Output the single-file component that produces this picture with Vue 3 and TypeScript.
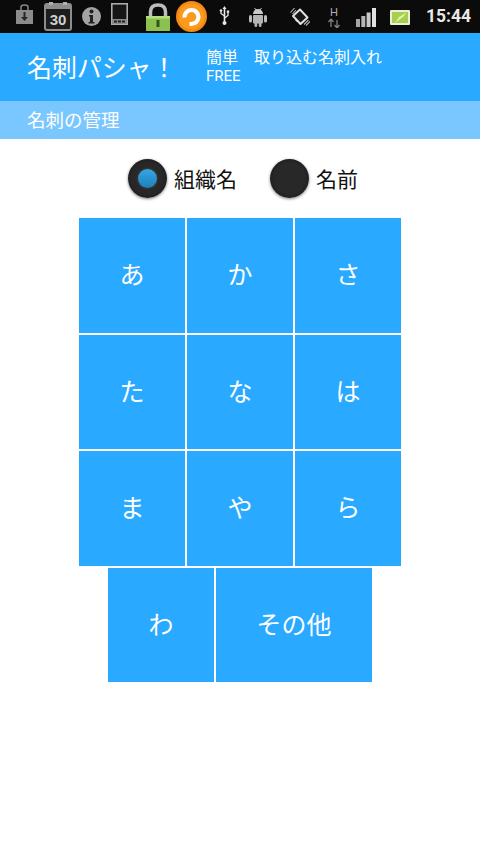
<script setup lang="ts">
const rows: string[][] = [
  ['あ', 'か', 'さ'],
  ['た', 'な', 'は'],
  ['ま', 'や', 'ら'],
]
</script>

<template>
  <div class="page">
    <div class="status">
      <svg class="i i-bag" width="19" height="20" viewBox="0 0 19 20">
        <path d="M1 6h17v14H1z" fill="#8b8b8b" />
        <path d="M6 6V3q0-2 3.500-2T13 3v3" fill="none" stroke="#8b8b8b" stroke-width="1.500" />
        <path d="M8.500 8h2v5h2.500l-3.500 4-3.500-4h2.500z" fill="#262626" />
      </svg>
      <svg class="i i-cal" width="28" height="29" viewBox="0 0 28 29">
        <rect x="1" y="2" width="26" height="26" rx="2" fill="#1d1d1d" stroke="#8d8d8d" stroke-width="2" />
        <path d="M1 2h26v5H1z" fill="#8d8d8d" />
        <path d="M5 0h4v3H5zM19 0h4v3h-4z" fill="#b0b0b0" />
        <text x="14" y="23" text-anchor="middle" class="cal">30</text>
      </svg>
      <svg class="i i-info" width="19" height="19" viewBox="0 0 19 19">
        <circle cx="9.500" cy="9.500" r="9.500" fill="#a3a3a3" />
        <circle cx="9.500" cy="4.500" r="2" fill="#222" />
        <path d="M7 8h4v7h1.500v1.500h-6V15H8V9.500H7z" fill="#222" />
      </svg>
      <svg class="i i-phone" width="17" height="22" viewBox="0 0 17 22">
        <rect x="0.800" y="0.800" width="15.400" height="20.400" fill="#161616" stroke="#ababab" stroke-width="1.600" />
        <path d="M1 16h15v5H1z" fill="#8a8a8a" />
        <path d="M3 17.500h3v2H3zM7 17.500h3v2H7zM11 17.500h3v2h-3z" fill="#222" />
      </svg>
      <svg class="i i-lock" width="24" height="28" viewBox="0 0 24 28">
        <path d="M4.500 14V9q0-7 7.500-7t7.500 7v5" fill="none" stroke="#bdbdbd" stroke-width="3.500" />
        <rect x="0" y="13" width="24" height="15" fill="#8cc152" />
        <path d="M0 13h24v2.500H0z" fill="#b3df7c" />
        <path d="M10.500 17h3v7h-3z" fill="#31551a" />
      </svg>
      <svg class="i i-orange" width="31" height="31" viewBox="0 0 31 31">
        <circle cx="15.500" cy="15.500" r="15.500" fill="#f58a12" />
        <circle cx="15.500" cy="15.500" r="13" fill="#fb9a1d" />
        <path d="M8.500 16.500a7 7 0 1 1 7 6.500h-2" fill="none" stroke="#fff" stroke-width="4.200" />
      </svg>
      <svg class="i i-usb" width="11" height="20" viewBox="0 0 11 20">
        <path d="M5.500 0l2 3H6.300v12.500H4.700V3H3.500z" fill="#e8e8e8" />
        <circle cx="5.500" cy="17" r="2" fill="#e8e8e8" />
        <path d="M5.500 12L9 9.500V7M5.500 10L2 7.500V5" fill="none" stroke="#e8e8e8" stroke-width="1.300" />
        <rect x="7.800" y="4.500" width="2.400" height="2.400" fill="#e8e8e8" />
        <circle cx="2" cy="4.500" r="1.300" fill="#e8e8e8" />
      </svg>
      <svg class="i i-droid" width="18" height="20" viewBox="0 0 18 20">
        <path d="M4 7a5 5 0 0 1 10 0z" fill="#c9c9c9" />
        <path d="M5.500 1l2 2.500M12.500 1l-2 2.500" stroke="#c9c9c9" stroke-width="1" />
        <rect x="4" y="8" width="10" height="8.500" rx="1" fill="#b5b5b5" />
        <rect x="0" y="8" width="3" height="7.500" rx="1.500" fill="#bdbdbd" />
        <rect x="15" y="8" width="3" height="7.500" rx="1.500" fill="#bdbdbd" />
        <rect x="5.500" y="15" width="2.700" height="5" rx="1.300" fill="#b5b5b5" />
        <rect x="9.800" y="15" width="2.700" height="5" rx="1.300" fill="#b5b5b5" />
      </svg>
      <svg class="i i-rot" width="20" height="19" viewBox="0 0 20 19">
        <path d="M10 2.500L17.500 10.500 10.500 17 3 9z" fill="#181818" stroke="#e2e2e2" stroke-width="1.900" stroke-linejoin="round" />
        <path d="M5.500 13l2 2" stroke="#e2e2e2" stroke-width="1" />
        <path d="M0.500 5.500L4.500 1M2.500 7L6 3M14 17.500L18.500 13M16 18.500L20 14.500" stroke="#b5b5b5" stroke-width="1.100" fill="none" />
      </svg>
      <svg class="i i-net" width="12" height="22" viewBox="0 0 12 22">
        <text x="6" y="10" text-anchor="middle" class="h">H</text>
        <path d="M3 13v8M3 13l-2.500 3M3 13l2.500 3" stroke="#808080" stroke-width="1.300" fill="none" />
        <path d="M9 14v8M9 22l-2.500-3M9 22l2.500-3" stroke="#808080" stroke-width="1.300" fill="none" />
      </svg>
      <svg class="i i-sig" width="20" height="19" viewBox="0 0 20 19">
        <path d="M0 11h4v8H0z" fill="#a5a5a5" />
        <path d="M5.300 8h4v11h-4z" fill="#b5b5b5" />
        <path d="M10.600 4.500h4V19h-4z" fill="#c8c8c8" />
        <path d="M16 0h4v19h-4z" fill="#e2e2e2" />
      </svg>
      <svg class="i i-bat" width="20" height="15" viewBox="0 0 20 15">
        <rect x="0" y="0" width="20" height="15" rx="1" fill="#eeeed6" />
        <rect x="2" y="2" width="16" height="11" fill="#a5cf4d" />
        <path d="M5 13l9-7-2.500 3 5-6.500-8 5 2-2.500z" fill="#e6f3c2" />
      </svg>
      <span class="time">15:44</span>
    </div>

    <header class="head">
      <div class="title">名刺パシャ！</div>
      <div class="sub">
        <div>簡単　取り込む名刺入れ</div>
        <div class="free">FREE</div>
      </div>
    </header>
    <div class="section">名刺の管理</div>

    <div class="radios">
      <label class="radio">
        <span class="knob"><span class="dot"></span></span>
        <span class="rlabel">組織名</span>
      </label>
      <label class="radio">
        <span class="knob"></span>
        <span class="rlabel">名前</span>
      </label>
    </div>

    <div class="grid">
      <div v-for="(row, r) in rows" :key="r" class="row">
        <button v-for="k in row" :key="k" class="key"><span class="label">{{ k }}</span></button>
      </div>
      <div class="row">
        <button class="key"><span class="label">わ</span></button>
        <button class="key wide"><span class="label">その他</span></button>
      </div>
    </div>
  </div>
</template>

<style>
html, body { margin: 0; background: #fff; }
</style>

<style scoped>
.page {
  width: 480px;
  height: 854px;
  overflow: hidden;
  background: #fff;
  font-family: "Noto Sans CJK JP", "Noto Sans", sans-serif;
}
.status {
  height: 33px;
  background: #0b0b0b;
  display: flex;
  align-items: flex-start;
}
.i { flex: none; display: block; }
.i-bag { margin: 4px 0 0 15px; }
.i-cal { margin: 2px 0 0 10px; }
.i-info { margin: 7px 0 0 10px; }
.i-phone { margin: 3px 0 0 10px; }
.i-lock { margin: 3px 0 0 18px; }
.i-orange { margin: 1px 0 0 6px; }
.i-usb { margin: 6px 0 0 12px; }
.i-droid { margin: 7px 0 0 19px; }
.i-rot { margin: 7px 0 0 23px; }
.i-net { margin: 6px 0 0 18px; }
.i-sig { margin: 8px 0 0 16px; }
.i-bat { margin: 10px 0 0 14px; }
.cal { font: 700 15px "Liberation Sans", sans-serif; fill: #d0d0d0; }
.h { font: 400 11px "Liberation Sans", sans-serif; fill: #b0b0b0; }
.time {
  margin-left: 16px;
  font: 700 17.500px "Roboto", "Liberation Sans", sans-serif;
  color: #e8e8e8;
  line-height: 33px;
}
.head {
  height: 68px;
  background: #29a9ff;
  color: #fff;
  display: flex;
  box-sizing: border-box;
  padding-left: 27px;
}
.title {
  font-size: 25px;
  line-height: 66px;
  width: 179px;
  flex: none;
  letter-spacing: -0.100px;
  white-space: nowrap;
}
.sub {
  font-family: "Roboto", "Noto Sans CJK JP", sans-serif;
  font-size: 16px;
  line-height: 19px;
  padding-top: 15px;
  white-space: nowrap;
}
.free { font-size: 15px; }
.section {
  height: 38px;
  background: #7ac6ff;
  color: #fff;
  font-size: 18.500px;
  line-height: 36px;
  padding-left: 27px;
}
.radios {
  height: 79px;
  display: flex;
  justify-content: center;
  align-items: center;
  gap: 33px;
  padding-left: 6px;
  color: #111;
  font-size: 21px;
}
.radio { display: flex; align-items: center; gap: 7px; }
.rlabel { padding-bottom: 2px; }
.knob {
  width: 39px;
  height: 39px;
  border-radius: 50%;
  background: radial-gradient(circle at 50% 50%, #282828 0 55%, #191919 85%, #202020 100%);
  box-shadow: 0 1px 3px rgba(0, 0, 0, 0.5);
  display: flex;
  align-items: center;
  justify-content: center;
}
.dot {
  width: 19px;
  height: 19px;
  border-radius: 50%;
  background: linear-gradient(#35a6e6, #1f7fb8);
  box-shadow: 0 0 2px 1px #3a3a3a;
}
.grid {
  display: flex;
  flex-direction: column;
  align-items: center;
  gap: 2px;
}
.row { display: flex; gap: 2px; }
.key {
  width: 106px;
  height: 114.500px;
  padding: 0 0 4px;
  border: 0;
  border-radius: 0;
  background: #29a9ff;
  color: #fff;
  font-family: inherit;
  font-size: 25px;
}
.wide { width: 156px; }
</style>
